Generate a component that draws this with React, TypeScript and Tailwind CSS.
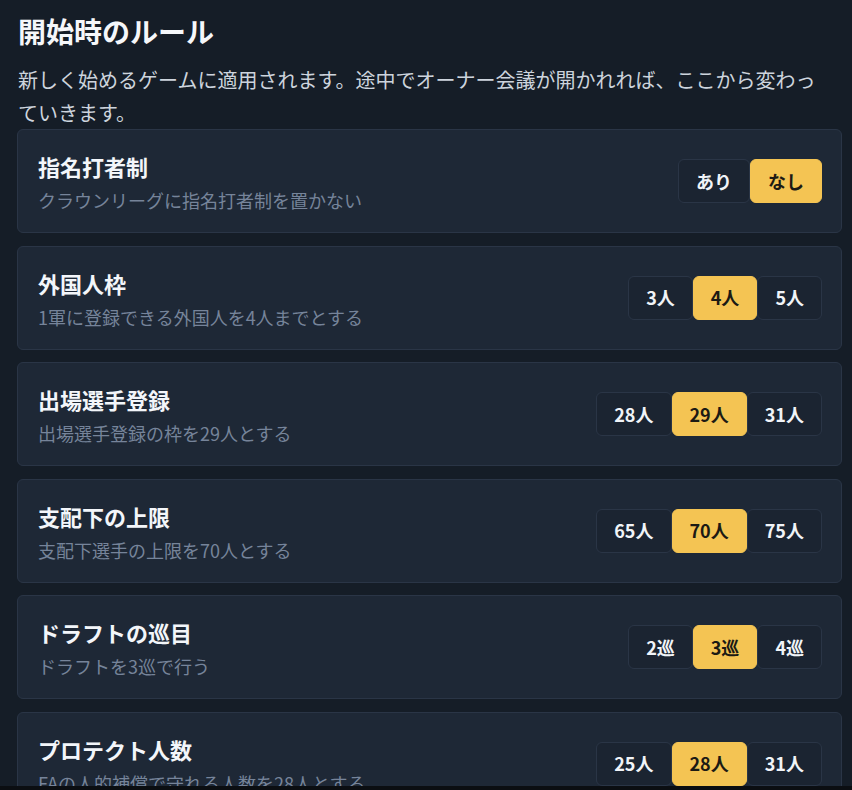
import { useState } from 'react';

interface RuleProps {
    title: string;
    desc: string;
    options: string[];
    initial: number;
}

const rules: RuleProps[] = [
    { title: '指名打者制', desc: 'クラウンリーグに指名打者制を置かない', options: ['あり', 'なし'], initial: 1 },
    { title: '外国人枠', desc: '1軍に登録できる外国人を4人までとする', options: ['3人', '4人', '5人'], initial: 1 },
    { title: '出場選手登録', desc: '出場選手登録の枠を29人とする', options: ['28人', '29人', '31人'], initial: 1 },
    { title: '支配下の上限', desc: '支配下選手の上限を70人とする', options: ['65人', '70人', '75人'], initial: 1 },
    { title: 'ドラフトの巡目', desc: 'ドラフトを3巡で行う', options: ['2巡', '3巡', '4巡'], initial: 1 },
    { title: 'プロテクト人数', desc: 'FAの人的補償で守れる人数を28人とする', options: ['25人', '28人', '31人'], initial: 1 },
];

function RuleCard({ title, desc, options, initial }: RuleProps) {
    const [selected, setSelected] = useState(initial);

    return (
        <div className="flex h-[104px] shrink-0 items-center justify-between rounded-md border border-[#2a3546] bg-[#1e2836] pl-[20px] pr-[19px]">
            <div className="self-start pt-[20px]">
                <div className="text-[22px] font-bold leading-[32px] text-[#f3f6fa]">{title}</div>
                <div className="mt-[4px] text-[18px] leading-[28px] text-[#76849a]">{desc}</div>
            </div>
            <div className="flex">
                {options.map((opt, i) => (
                    <button
                        key={opt}
                        onClick={() => setSelected(i)}
                        className={
                            i === selected
                                ? 'h-[44px] rounded-md border border-[#f4c453] bg-[#f4c453] px-[17px] text-[18px] font-bold text-[#1c1a14]'
                                : 'h-[44px] rounded-md border border-[#2a3546] bg-[#1b2431] px-[17px] text-[18px] font-bold text-[#f1f4f8]'
                        }
                    >
                        {opt}
                    </button>
                ))}
            </div>
        </div>
    );
}

export default function App() {
    return (
        <div
            className="flex h-[790px] w-[852px] flex-col bg-[#151d27]"
            style={{ fontFamily: '"Noto Sans CJK JP", "Noto Sans", sans-serif' }}
        >
            <div className="flex-1 overflow-hidden pl-[17px] pr-[10px]">
                <h1 className="pl-px pt-[12px] text-[28px] font-bold leading-[39px] text-[#f5f7fa]">開始時のルール</h1>
                <p className="mt-[12px] w-[806px] pl-px text-[20px] leading-[33px] text-[#cdd4dd]">
                    新しく始めるゲームに適用されます。途中でオーナー会議が開かれれば、ここから変わっていきます。
                </p>
                <div className="flex flex-col gap-[12.5px]">
                    {rules.map(rule => (
                        <RuleCard key={rule.title} {...rule} />
                    ))}
                </div>
            </div>
            <div className="h-[4px] bg-[#0b0e12]" />
        </div>
    );
}
